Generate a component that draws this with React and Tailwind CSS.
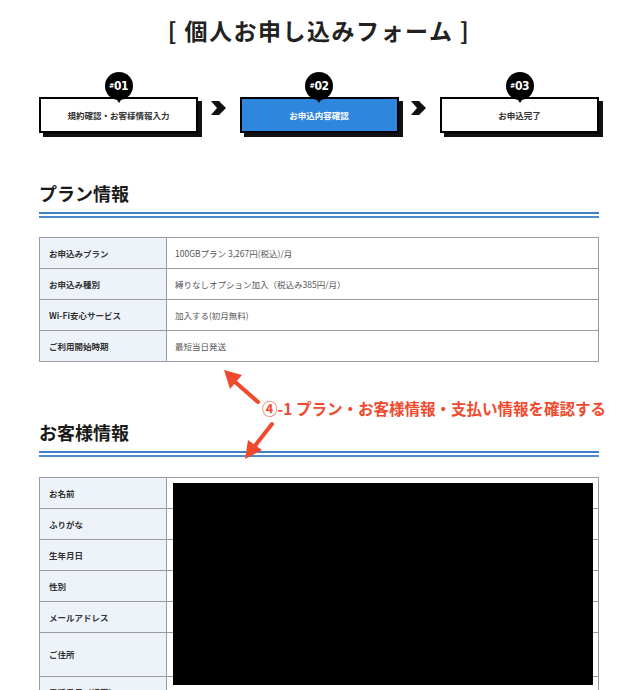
import React from "react";

const steps = [
  { no: "01", label: "規約確認・お客様情報入力", active: false },
  { no: "02", label: "お申込内容確認", active: true },
  { no: "03", label: "お申込完了", active: false },
];

const plan = [
  ["お申込みプラン", "100GBプラン 3,267円(税込)/月"],
  ["お申込み種別", "縛りなしオプション加入（税込み385円/月）"],
  ["Wi-Fi安心サービス", "加入する(初月無料)"],
  ["ご利用開始時期", "最短当日発送"],
];

const customer = [
  ["お名前", 31],
  ["ふりがな", 31],
  ["生年月日", 31],
  ["性別", 31],
  ["メールアドレス", 31],
  ["ご住所", 44],
  ["電話番号（携帯）", 31],
];

function Step({ step }) {
  return (
    <div className="relative w-[159px] pt-[25px]">
      <div className="absolute left-1/2 top-0 z-10 flex h-[28px] w-[28px] -translate-x-1/2 items-center justify-center rounded-full bg-black">
        <span className="font-['DejaVu_Sans_Condensed',sans-serif] text-[12px] font-bold leading-none tracking-[-0.5px] text-white">
          <span className="text-[7px] align-[2px]">#</span>
          {step.no}
        </span>
        <div className="absolute left-1/2 top-[25px] h-0 w-0 -translate-x-1/2 border-x-[4px] border-t-[6px] border-x-transparent border-t-black" />
      </div>
      <div
        className={
          "flex h-[36px] items-center justify-center border-2 border-black text-[8.5px] font-bold shadow-[4px_4px_0_#111] " +
          (step.active ? "bg-[#2f86dd] text-white" : "bg-white text-[#333]")
        }
      >
        {step.label}
      </div>
    </div>
  );
}

function Chevron() {
  return (
    <div className="flex flex-1 justify-center pt-[28px]">
      <svg width="16" height="16" viewBox="0 0 16 16">
        <polygon points="0,1 8,1 15,8 8,15 0,15 6,8" fill="#111" />
      </svg>
    </div>
  );
}

function Heading({ children, mt }) {
  return (
    <>
      <h2 className={"h-[24px] text-[18px] font-bold leading-[24px] text-[#1a1a1a] " + mt}>
        {children}
      </h2>
      <div className="mt-[7px] h-[2px] bg-[#3f80c4]" />
      <div className="mt-[2px] h-[2px] bg-[#4a8ccc]" />
    </>
  );
}

export default function App() {
  return (
    <div className="relative min-h-[690px] bg-white pt-[17px] font-['Noto_Sans_CJK_JP','Noto_Sans',sans-serif]">
      <div className="ml-[39px] w-[560px] pb-10">
        <h1 className="h-[26px] text-center text-[23px] font-bold leading-[26px] tracking-[1.5px] text-[#222]">
          [ 個人お申し込みフォーム ]
        </h1>

        <div className="mt-[29px] flex">
          <Step step={steps[0]} />
          <Chevron />
          <Step step={steps[1]} />
          <Chevron />
          <Step step={steps[2]} />
        </div>

        <Heading mt="mt-[48px]">プラン情報</Heading>

        <div className="mt-[19px] border-x border-t border-[#9a9aa6]">
          {plan.map(([k, v]) => (
            <div key={k} className="flex h-[31px] border-b border-[#9a9aa6] text-[8.5px]">
              <div className="flex w-[127px] items-center border-r border-[#9a9aa6] bg-[#eef3fa] pl-[9px] font-bold text-[#333]">
                {k}
              </div>
              <div className="flex flex-1 items-center pl-[8px] text-[#555]">{v}</div>
            </div>
          ))}
        </div>

        <Heading mt="mt-[58px]">お客様情報</Heading>

        <div className="relative mt-[20px] border-x border-t border-[#9a9aa6]">
          {customer.map(([k, h]) => (
            <div
              key={k}
              className={"flex border-b border-[#9a9aa6] text-[8.5px] " + (h === 44 ? "h-[44px]" : "h-[31px]")}
            >
              <div className="flex w-[127px] items-center border-r border-[#9a9aa6] bg-[#eef3fa] pl-[9px] font-bold text-[#333]">
                {k}
              </div>
              <div className="flex-1" />
            </div>
          ))}
          <div className="absolute left-[133px] top-[5px] h-[202px] w-[420px] bg-black" />
        </div>
      </div>

      <div className="absolute left-[212px] top-[362px]">
        <svg width="80" height="106" viewBox="0 0 80 106">
          <g stroke="#ef4a2e" strokeWidth="4" strokeLinecap="round">
            <line x1="46" y1="40" x2="22" y2="19" />
            <line x1="60" y1="62" x2="42" y2="85" />
          </g>
          <polygon points="12,8 30,13 18,27" fill="#ef4a2e" />
          <polygon points="33,97 36,78 50,88" fill="#ef4a2e" />
        </svg>
      </div>
      <div className="absolute left-[262px] top-[396px] text-[15.5px] font-bold leading-[24px] text-[#ef4a2e]">
        ④-1 プラン・お客様情報・支払い情報を確認する
      </div>
    </div>
  );
}
